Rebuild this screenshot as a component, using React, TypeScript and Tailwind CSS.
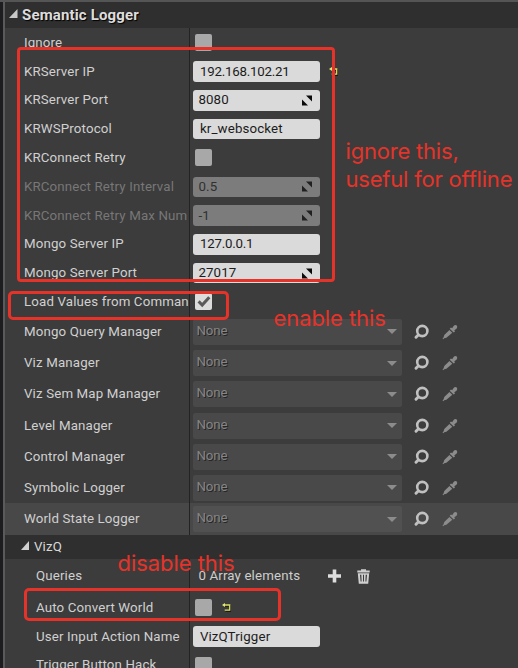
import type { ReactNode } from "react";

function Reset() {
  return (
    <svg width="9" height="9" viewBox="0 0 9 9" className="shrink-0">
      <path d="M2 2.5H8.2V8H3" fill="none" stroke="#1c1c12" strokeWidth="1.5" transform="translate(.6 .6)" />
      <path d="M2 2H7.7V7.2H2.7" fill="none" stroke="#d9dc62" strokeWidth="1.3" />
      <path d="M0 2L3 0V4Z" fill="#e6e874" />
    </svg>
  );
}

function Expand({ dim }: { dim?: boolean }) {
  return (
    <svg width="10" height="11" viewBox="0 0 10 11" className="shrink-0" fill={dim ? "#202020" : "#0a0a0a"}>
      <path d="M4 .6H10V6.6Z" />
      <path d="M0 4.4V10.4H6Z" />
    </svg>
  );
}

function Field({ value, num, dim, tight }: { value: string; num?: boolean; dim?: boolean; tight?: boolean }) {
  return (
    <div
      className={`flex h-[20.5px] w-[126.5px] shrink-0 items-center justify-between rounded-[3px] pr-[7.5px] ${
        num ? "pl-[5px]" : "pl-[6.5px]"
      } ${tight ? "tracking-[-0.22px]" : ""} ${dim ? "bg-[#7c7c7c] text-[#303030]" : "bg-[#dadada] text-[#1c1c1c]"}`}
    >
      <span>{value}</span>
      {num && <Expand dim={dim} />}
    </div>
  );
}

function Check({ on }: { on?: boolean }) {
  return (
    <div className={`ml-[2px] flex size-[17px] shrink-0 items-center justify-center rounded-[2px] ${on ? "bg-[#dcdcdc]" : "bg-[#a8a8a8]"}`}>
      {on && (
        <svg width="14" height="13" viewBox="0 0 14 13">
          <path d="M1.6 6.4L5.2 10L12.3 2.2" fill="none" stroke="#5a5a5a" strokeWidth="3" />
        </svg>
      )}
    </div>
  );
}

function Row({
  label,
  children,
  dim,
  nested,
  height = "h-[28.8px]",
  bg = "",
}: {
  label: string;
  children: ReactNode;
  dim?: boolean;
  nested?: boolean;
  height?: string;
  bg?: string;
}) {
  return (
    <div className={`flex shrink-0 ${height} ${bg}`}>
      <div
        className={`flex w-[185px] shrink-0 items-center overflow-hidden border-r border-[#232323] whitespace-nowrap ${
          nested ? "pl-[31px]" : "pl-[19px]"
        } ${dim ? "text-[#777777]" : "text-[#d0d0d0]"}`}
      >
        <span>{label}</span>
      </div>
      <div className="flex grow items-center pl-[3.4px]">{children}</div>
    </div>
  );
}

function Picker({ label, hover }: { label: string; hover?: boolean }) {
  return (
    <Row label={label} height="h-[31.2px]" bg={hover ? "bg-[#484848]" : ""}>
      <div
        className={`flex h-[26px] w-[208.5px] shrink-0 items-center justify-between rounded-[2px] pr-[4.5px] pl-[3px] ${
          hover ? "bg-[#515151]" : "bg-[#494949]"
        }`}
      >
        <span className="relative -top-px tracking-[-0.1px] text-[#858585] [text-shadow:1px_1px_0_#252525]">None</span>
        <svg width="10" height="5" viewBox="0 0 10 5" fill="#8c8c8c">
          <path d="M0 0H10L5 5Z" />
        </svg>
      </div>
      <svg width="16" height="16" viewBox="0 0 16 16" className="ml-[11px] shrink-0" fill="none" stroke="#c0c0c0">
        <circle cx="9.3" cy="7" r="5.1" strokeWidth="2.6" />
        <path d="M5.2 11L3 13.2" strokeWidth="3" strokeLinecap="round" />
      </svg>
      <svg width="16" height="16" viewBox="0 0 16 16" className="ml-[13.5px] shrink-0" fill="#8c8c8c">
        <path d="M10.2 4.2L11.6 1.9Q13.2 .3 14.8 1.6Q16 3 14.5 4.8L12.3 6.3L13 7.4L11.7 8.6L7.7 4.8L9 3.5Z" />
        <path d="M7.4 6L10.3 8.8L4.4 13.7L2.2 14.3L1.2 15.3L.5 14.5L1.5 13.4L2.3 11Z" />
      </svg>
    </Row>
  );
}

const managers = ["Mongo Query Manager", "Viz Manager", "Viz Sem Map Manager", "Level Manager", "Control Manager", "Symbolic Logger"];

function Note({ className, children }: { className: string; children: ReactNode }) {
  return (
    <div className={`absolute font-[Inter,sans-serif] leading-[28px] whitespace-nowrap text-[#e63329] ${className}`}>{children}</div>
  );
}

export default function App() {
  return (
    <div className="relative h-[668px] w-[518px] overflow-hidden bg-[#3c3c3c] font-[Roboto,sans-serif] text-[13.3px] leading-[18px] tracking-[0.14px]">
      <div className="flex h-full border-t-2 border-[#555555]">
        <div className="w-[3px] shrink-0 bg-[#1d1d20]" />
        <div className="w-[2px] shrink-0 bg-[#5a5a5a]" />
        <div className="flex min-w-0 grow flex-col">
          <div className="flex h-[26.4px] shrink-0 items-center bg-[#2f2f2f] pl-[4px]">
            <svg width="9" height="9" viewBox="0 0 9 9" className="relative -top-[2px] mr-[4px]" fill="#c8c8c8">
              <path d="M8.5 0V9H0Z" />
            </svg>
            <span className="relative -top-[0.5px] text-[15px] font-bold tracking-[0.15px] text-[#dddddd] [text-shadow:1px_1px_1px_#000]">Semantic Logger</span>
          </div>
          <Row label="Ignore"><Check /></Row>
          <Row label="KRServer IP">
            <Field value="192.168.102.21" tight />
            <span className="ml-[9px]"><Reset /></span>
          </Row>
          <Row label="KRServer Port"><Field value="8080" num /></Row>
          <Row label="KRWSProtocol"><Field value="kr_websocket" /></Row>
          <Row label="KRConnect Retry"><Check /></Row>
          <Row label="KRConnect Retry Interval" dim><Field value="0.5" num dim /></Row>
          <Row label="KRConnect Retry Max Num" dim><Field value="-1" num dim /></Row>
          <Row label="Mongo Server IP"><Field value="127.0.0.1" tight /></Row>
          <Row label="Mongo Server Port"><Field value="27017" num /></Row>
          <Row label="Load Values from Comman"><Check on /></Row>
          {managers.map((m) => (
            <Picker key={m} label={m} />
          ))}
          <Picker label="World State Logger" hover />
          <div className="flex h-[24.6px] shrink-0 items-center bg-[#2f2f2f] pl-[16px] text-[#d8d8d8]">
            <svg width="8" height="9" viewBox="0 0 8 9" className="relative -top-px mr-[5px]" fill="#d0d0d0">
              <path d="M8 0V9H0Z" />
            </svg>
            VizQ
          </div>
          <Row label="Queries" nested height="h-[34.2px]">
            <span className="ml-[5px] w-[130px] shrink-0 whitespace-nowrap text-[#cecece]">0 Array elements</span>
            <svg width="13" height="14" viewBox="0 0 13 14" fill="#dedede">
              <path d="M4.7 .5H8.3V5.2H13V8.8H8.3V13.5H4.7V8.8H0V5.2H4.7Z" />
            </svg>
            <svg width="13" height="15" viewBox="0 0 13 15" className="ml-[16px]" fill="#cfcfcf">
              <path d="M.3 1.6H4V.3H9V1.6H12.7V3.5H.3Z" />
              <path fillRule="evenodd" d="M.8 4.3H12.2L11.2 14.7H1.8ZM3 5.8L3.6 12.5H4.6L4.3 5.8ZM6 5.8V12.5H7V5.8ZM8.7 5.8L8.4 12.5H9.4L10 5.8Z" />
            </svg>
          </Row>
          <Row label="Auto Convert World" nested>
            <Check />
            <span className="ml-[10px]"><Reset /></span>
          </Row>
          <Row label="User Input Action Name" nested><Field value="VizQTrigger" /></Row>
          <Row label="Trigger Button Hack" nested><Check /></Row>
        </div>
      </div>
      <div className="absolute top-[47px] left-[17px] h-[235px] w-[318px] rounded-[4px] border-[3px] border-[#e63329]" />
      <div className="absolute top-[290.5px] left-[8px] h-[29px] w-[221px] rounded-[5px] border-[3px] border-[#e63329]" />
      <div className="absolute top-[588px] left-[24px] h-[33px] w-[257px] rounded-[5px] border-[3px] border-[#e63329]" />
      <Note className="top-[137px] left-[345.5px] text-[22px] tracking-[-0.2px]">
        ignore this,
        <br />
        useful for offline
      </Note>
      <Note className="top-[304px] left-[273.5px] text-[22px] tracking-[-0.08px]">enable this</Note>
      <Note className="top-[549px] left-[117.5px] text-[22px] tracking-[-0.05px]">disable this</Note>
    </div>
  );
}
